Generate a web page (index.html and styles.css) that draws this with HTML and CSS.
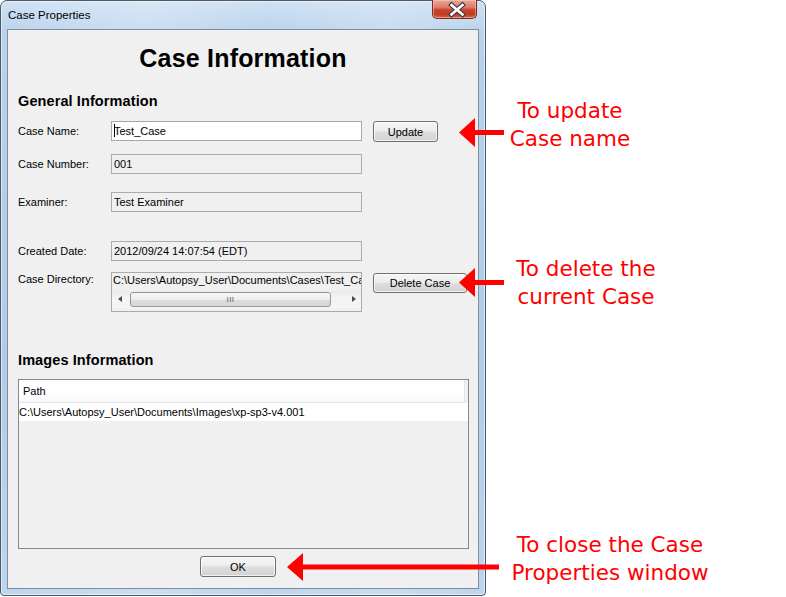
FILE: index.html
```html
<!DOCTYPE html>
<html>
<head>
<meta charset="utf-8">
<title>Case Properties</title>
<link rel="stylesheet" href="styles.css">
</head>
<body>
<div class="stage">
  <div class="window">
    <div class="titlebar">
      <span class="title">Case Properties</span>
      <div class="close">
        <svg width="45" height="19" viewBox="0 0 45 19">
          <path d="M19.5 5 L30.5 14.5 M30.5 5 L19.5 14.5" stroke="#3b3b48" stroke-width="4.8" stroke-linecap="square" fill="none"/>
          <path d="M19.5 5 L30.5 14.5 M30.5 5 L19.5 14.5" stroke="#ffffff" stroke-width="2.6" stroke-linecap="square" fill="none"/>
        </svg>
      </div>
    </div>
    <div class="content">
      <h1 class="heading">Case Information</h1>
      <h2 class="section">General Information</h2>

      <div class="row r-name">
        <span class="lbl">Case Name:</span>
        <div class="field edit"><span class="caret"></span>Test_Case</div>
        <button class="btn btn-update">Update</button>
      </div>
      <div class="row r-number">
        <span class="lbl">Case Number:</span>
        <div class="field">001</div>
      </div>
      <div class="row r-exam">
        <span class="lbl">Examiner:</span>
        <div class="field">Test Examiner</div>
      </div>
      <div class="row r-date">
        <span class="lbl">Created Date:</span>
        <div class="field">2012/09/24 14:07:54 (EDT)</div>
      </div>
      <div class="row r-dir">
        <span class="lbl lbl-dir">Case Directory:</span>
        <div class="dirbox">
          <div class="dirtext"><span class="dirinner">C:\Users\Autopsy_User\Documents\Cases\Test_Case</span></div>
          <div class="hscroll">
            <span class="arr arr-left"></span>
            <div class="track"><div class="thumb"><span class="grip">III</span></div></div>
            <span class="arr arr-right"></span>
          </div>
        </div>
        <button class="btn btn-delete">Delete Case</button>
      </div>

      <h2 class="section images">Images Information</h2>
      <div class="table">
        <div class="thead"><span class="th">Path</span></div>
        <div class="trow">C:\Users\Autopsy_User\Documents\Images\xp-sp3-v4.001</div>
      </div>
      <div class="okrow"><button class="btn btn-ok">OK</button></div>
    </div>
  </div>

  <svg class="arrow a-update" width="45" height="29" viewBox="0 0 45 29">
    <polygon points="0,14.5 16,0 16,12 45,12 45,17 16,17 16,29" fill="#ff0000"/>
  </svg>
  <div class="note n-update">To update<br>Case name</div>

  <svg class="arrow a-delete" width="45" height="29" viewBox="0 0 45 29">
    <polygon points="0,14.5 16,0 16,12 45,12 45,17 16,17 16,29" fill="#ff0000"/>
  </svg>
  <div class="note n-delete">To delete the<br>current Case</div>

  <svg class="arrow a-ok" width="212" height="28" viewBox="0 0 212 28">
    <polygon points="0,14 16,0 16,11.5 212,11.5 212,16.5 16,16.5 16,28" fill="#ff0000"/>
  </svg>
  <div class="note n-ok">To close the Case<br>Properties window</div>
</div>
</body>
</html>
```
FILE: styles.css
```css
html, body {
  margin: 0;
  padding: 0;
  background: #ffffff;
}

body {
  font-family: "Liberation Sans", Arial, sans-serif;
  font-size: 11px;
  color: #000000;
}

.stage {
  position: relative;
  width: 786px;
  height: 597px;
  overflow: hidden;
}

/* ---------- window frame ---------- */
.window {
  width: 486px;
  height: 596px;
  box-sizing: border-box;
  border: 1px solid #4b5967;
  border-radius: 7px 7px 4px 4px;
  padding: 0 6px 6px 6px;
  display: flex;
  flex-direction: column;
  background:
    linear-gradient(90deg, rgba(255,255,255,0.0) 0%, rgba(255,255,255,0.22) 30%, rgba(255,255,255,0.0) 55%, rgba(255,255,255,0.18) 80%, rgba(255,255,255,0) 100%),
    linear-gradient(180deg, #cfe1f3 0%, #b8d1ec 6%, #b1cbe8 60%, #bdd5ee 100%);
  box-shadow: inset 0 0 0 1px rgba(255,255,255,0.55);
}

.titlebar {
  height: 28px;
  flex: none;
  display: flex;
  align-items: flex-start;
}

.title {
  padding-left: 1px;
  line-height: 28px;
  font-family: "Liberation Sans", Arial, sans-serif;
  font-size: 11.5px;
  color: #000000;
}

.close {
  margin-left: auto;
  margin-right: 2px;
  margin-top: -1px;
  width: 45px;
  height: 19px;
  box-sizing: border-box;
  border: 1px solid #7a2a20;
  border-top: none;
  border-radius: 0 0 5px 5px;
  background:
    linear-gradient(180deg, #e9a697 0%, #dd7f6b 40%, #c8432d 55%, #c13a24 80%, #d86a4f 100%);
  box-shadow: inset 0 0 0 1px rgba(255,220,210,0.45);
  position: relative;
}

.close svg {
  position: absolute;
  left: -1px;
  top: 0;
}

/* ---------- content panel ---------- */
.content {
  flex: 1;
  border: 1px solid #7f8e9d;
  background: #f0f0f0;
  padding: 0 0 0 10px;
  display: flex;
  flex-direction: column;
}

.heading {
  margin: 14px 10px 0 0;
  line-height: 28px;
  height: 28px;
  font-size: 25px;
  font-weight: bold;
  text-align: center;
  letter-spacing: 0.2px;
}

.section {
  margin: 20px 0 0 0;
  line-height: 18px;
  height: 18px;
  font-size: 14.5px;
  font-weight: bold;
  letter-spacing: 0.1px;
}

.section.images {
  margin-top: 39px;
}

.row {
  display: flex;
  align-items: flex-start;
}

.r-name   { margin-top: 11px; }
.r-number { margin-top: 12px; }
.r-exam   { margin-top: 18px; }
.r-date   { margin-top: 29px; }
.r-dir    { margin-top: 11px; }

.lbl {
  width: 93px;
  flex: none;
  line-height: 20px;
}

.lbl-dir {
  line-height: 15px;
}

.field {
  width: 251px;
  height: 20px;
  box-sizing: border-box;
  border: 1px solid #ababab;
  background: #f0f0f0;
  padding: 0 2px;
  line-height: 18px;
  white-space: nowrap;
  overflow: hidden;
  flex: none;
}

.field.edit {
  background: #ffffff;
  border-color: #a6a8ad;
}

.caret {
  display: inline-block;
  width: 1px;
  height: 13px;
  background: #000;
  vertical-align: -2px;
  margin-right: -1px;
}

/* ---------- buttons ---------- */
.btn {
  font-family: "Liberation Sans", Arial, sans-serif;
  font-size: 11px;
  color: #000;
  height: 21px;
  box-sizing: border-box;
  border: 1px solid #707070;
  border-radius: 3px;
  padding: 0;
  background: linear-gradient(180deg, #f6f6f6 0%, #ececec 48%, #dedede 52%, #d2d2d2 100%);
  box-shadow: inset 0 0 0 1px rgba(255,255,255,0.7);
  flex: none;
}

.btn-update {
  width: 65px;
  margin-left: 11px;
}

.btn-delete {
  width: 94px;
  margin-left: 11px;
  margin-top: 1px;
  height: 20px;
}

/* ---------- directory box with scrollbar ---------- */
.dirbox {
  width: 251px;
  height: 40px;
  box-sizing: border-box;
  border: 1px solid #ababab;
  background: #f0f0f0;
  flex: none;
  display: flex;
  flex-direction: column;
}

.dirtext {
  width: 249px;
  padding-left: 1px;
  box-sizing: border-box;
  line-height: 15px;
  height: 15px;
  white-space: nowrap;
  overflow: hidden;
}

.dirinner {
  display: inline-block;
}

.hscroll {
  margin-top: 3px;
  height: 17px;
  display: flex;
  align-items: center;
  background: linear-gradient(180deg, #e8e8e8, #f4f4f4 40%, #f4f4f4);
}

.arr {
  width: 17px;
  height: 17px;
  flex: none;
  position: relative;
}

.arr-left::before,
.arr-right::before {
  content: "";
  position: absolute;
  top: 5px;
  width: 0;
  height: 0;
  border-top: 3.5px solid transparent;
  border-bottom: 3.5px solid transparent;
}

.arr-left::before {
  left: 6px;
  border-right: 4px solid #4a4a4a;
}

.arr-right::before {
  left: 8px;
  border-left: 4px solid #4a4a4a;
}

.track {
  flex: 1;
  height: 17px;
  display: flex;
  align-items: center;
}

.thumb {
  width: 201px;
  height: 15px;
  margin-left: 1px;
  box-sizing: border-box;
  border: 1px solid #979797;
  border-radius: 3px;
  background: linear-gradient(180deg, #f7f7f7 0%, #ececec 50%, #dcdcdc 51%, #d8d8d8 100%);
  display: flex;
  align-items: center;
  justify-content: center;
}

.grip {
  font-size: 8px;
  line-height: 8px;
  color: #5a5a5a;
  letter-spacing: 0.5px;
}

/* ---------- table ---------- */
.table {
  margin-top: 10px;
  width: 451px;
  height: 170px;
  box-sizing: border-box;
  border: 1px solid #828790;
  background: #f0f0f0;
  flex: none;
}

.thead {
  height: 23px;
  box-sizing: border-box;
  width: 446px;
  border-bottom: 1px solid #e3e5e8;
  border-right: 1px solid #e3e5e8;
  background: linear-gradient(180deg, #ffffff 0%, #ffffff 45%, #f7f8fa 100%);
}

.th {
  display: block;
  padding-left: 4px;
  line-height: 22px;
}

.trow {
  height: 18px;
  line-height: 18px;
  background: #ffffff;
  white-space: nowrap;
  padding-left: 0;
}

.okrow {
  margin-top: 7px;
  display: flex;
  padding-left: 182px;
}

.btn-ok {
  width: 76px;
}

/* ---------- annotations (callouts over the screenshot) ---------- */
.arrow {
  position: absolute;
}

.a-update { left: 459px; top: 118px; }
.a-delete { left: 459px; top: 268px; }
.a-ok     { left: 287px; top: 553px; }

.note {
  position: absolute;
  width: 230px;
  text-align: center;
  font-family: "DejaVu Sans", Verdana, sans-serif;
  font-size: 21.5px;
  line-height: 28px;
  color: #ff0000;
}

.n-update { left: 455px; top: 97px; }
.n-delete { left: 471px; top: 255px; }
.n-ok     { left: 495px; top: 531px; }
```
